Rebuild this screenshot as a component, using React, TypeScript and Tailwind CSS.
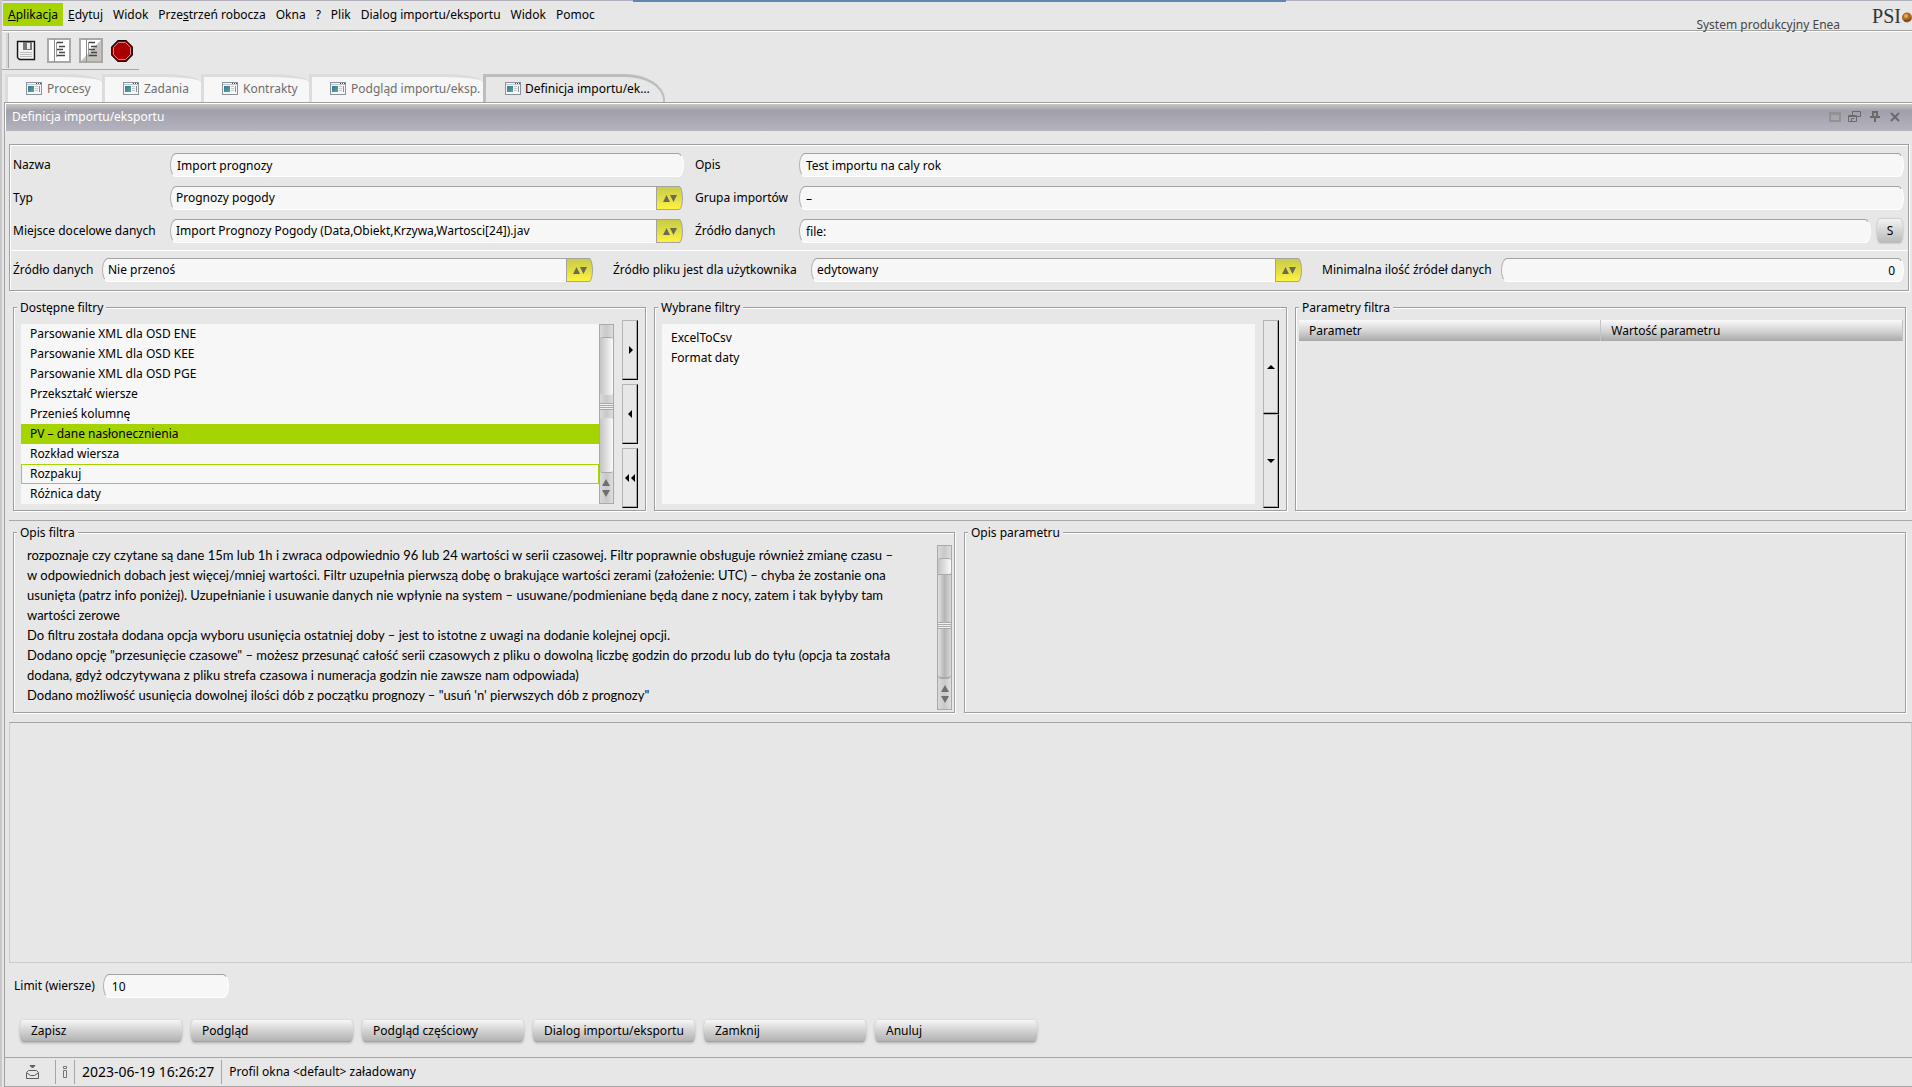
import type { ReactNode } from "react";
import clsx from "clsx";

const menuItems = [
  { label: <><u>A</u>plikacja</>, active: true },
  { label: <><u>E</u>dytuj</> },
  { label: "Widok" },
  { label: <>Prze<u>s</u>trzeń robocza</> },
  { label: "Okna" },
  { label: "?" },
  { label: "Plik" },
  { label: "Dialog importu/eksportu" },
  { label: "Widok" },
  { label: "Pomoc" },
];

const tabs = [
  { label: "Procesy", width: "w-[97px]" },
  { label: "Zadania", width: "w-[99px]" },
  { label: "Kontrakty", width: "w-[108px]" },
  { label: "Podgląd importu/eksp.", width: "w-[174px]" },
];

const availableFilters = [
  "Parsowanie XML dla OSD ENE",
  "Parsowanie XML dla OSD KEE",
  "Parsowanie XML dla OSD PGE",
  "Przekształć wiersze",
  "Przenieś kolumnę",
  "PV – dane nasłonecznienia",
  "Rozkład wiersza",
  "Rozpakuj",
  "Różnica daty",
];

const filterDescription = [
  "rozpoznaje czy czytane są dane 15m lub 1h i zwraca odpowiednio 96 lub 24 wartości w serii czasowej. Filtr poprawnie obsługuje również zmianę czasu –",
  "w odpowiednich dobach jest więcej/mniej wartości. Filtr uzupełnia pierwszą dobę o brakujące wartości zerami (założenie: UTC) – chyba że zostanie ona",
  "usunięta (patrz info poniżej). Uzupełnianie i usuwanie danych nie wpłynie na system – usuwane/podmieniane będą dane z nocy, zatem i tak byłyby tam",
  "wartości zerowe",
  "Do filtru została dodana opcja wyboru usunięcia ostatniej doby – jest to istotne z uwagi na dodanie kolejnej opcji.",
  'Dodano opcję "przesunięcie czasowe" – możesz przesunąć całość serii czasowych z pliku o dowolną liczbę godzin do przodu lub do tyłu (opcja ta została',
  "dodana, gdyż odczytywana z pliku strefa czasowa i numeracja godzin nie zawsze nam odpowiada)",
  "Dodano możliwość usunięcia dowolnej ilości dób z początku prognozy – \"usuń 'n' pierwszych dób z prognozy\"",
];

const actions = ["Zapisz", "Podgląd", "Podgląd częściowy", "Dialog importu/eksportu", "Zamknij", "Anuluj"];

const TabIcon = () => (
  <svg width="16" height="13" viewBox="0 0 16 13" className="shrink-0" aria-hidden="true">
    <defs>
      <linearGradient id="tabIcon" x1="0" y1="0" x2="1" y2="1">
        <stop offset="0" stopColor="#3c6fa5" />
        <stop offset="1" stopColor="#4fb08a" />
      </linearGradient>
    </defs>
    <rect x="0.5" y="0.5" width="15" height="12" fill="#f7f7f7" stroke="#8c9299" />
    <path d="M1 2.5h14" stroke="#c3c7cc" />
    <path d="M10 1.5h1M12 1.5h1M14 1.5h1" stroke="#44494f" />
    <rect x="2" y="4" width="6" height="6" fill="url(#tabIcon)" />
    <path d="M9 4.5h3M9 6.5h3M9 8.5h3" stroke="#c3c7cc" />
    <path d="M13.5 4v6" stroke="#8c9299" />
  </svg>
);

const SaveIcon = () => (
  <svg width="20" height="21" viewBox="0 0 20 21" aria-hidden="true">
    <path d="M1.5 1.5h17v18h-15l-2-2z" fill="#f4f4f4" stroke="#151515" strokeWidth="1.4" />
    <path d="M2.5 2.5v15M17.5 2.5v16" stroke="#b9b9b9" />
    <rect x="7" y="2" width="9" height="8" fill="#777" />
    <rect x="11" y="3" width="3" height="6" fill="#eee" />
    <path d="M4 12.5h12M4 14.5h12M4 16.5h12" stroke="#bcbcbc" />
  </svg>
);

const DocumentIcon = ({ shaded = false }: { shaded?: boolean }) => (
  <svg width="24" height="25" viewBox="0 0 24 25" aria-hidden="true">
    <rect x="1" y="1" width="22" height="23" fill="#fff" stroke="#a9a9a9" strokeWidth="2" />
    {shaded && <path d="M22 2v21H2z" fill="#c6c3bb" />}
    <path d="M7.5 1v23" stroke="#8b8b8b" />
    <path d="M10 4.5h6M12 8.5h6M10 11.5h6M12 14.5h6M10 17.5h8" stroke="#474747" strokeWidth="1.5" />
    <path d="M9.5 4v15" stroke="#999" />
  </svg>
);

const StopIcon = () => (
  <svg width="22" height="22" viewBox="0 0 22 22" aria-hidden="true">
    <path d="M7 .7h8L21.3 7v8L15 21.3H7L.7 15V7z" fill="#a80000" stroke="#1c0000" strokeWidth="1.2" />
    <path d="M7.5 2.5h7l5 5v7l-5 5h-7l-5-5v-7z" fill="none" stroke="#d98080" />
  </svg>
);

const Field = ({ id, value, className }: { id: string; value: string; className?: string }) => (
  <input
    id={id}
    defaultValue={value}
    className={clsx(
      "h-6 w-full min-w-0 rounded-[6px/12px] border border-t-[#a3a3a3] border-r-white border-b-white border-l-[#b0b0b0] bg-[#f7f7f7] px-1.5 outline-none",
      className,
    )}
  />
);

const Combo = ({ id, value }: { id: string; value: string }) => (
  <div className="mr-px flex h-6 min-w-0">
    <select
      id={id}
      className="h-6 min-w-0 flex-1 appearance-none rounded-tl-[6px_12px] rounded-bl-[6px_12px] border border-r-0 border-t-[#a3a3a3] border-b-white border-l-[#b0b0b0] bg-[#f7f7f7] px-[5px] outline-none"
    >
      <option>{value}</option>
    </select>
    <span className="pointer-events-none flex w-[27px] items-center justify-center rounded-tr-[4px_12px] rounded-br-[4px_12px] border border-[#a3a3a3] bg-linear-to-b from-[#c9cc46] via-[#e0dd45] to-[#fff23f]">
      <svg width="14" height="7" viewBox="0 0 14 7" fill="#6b6b55" aria-hidden="true">
        <path d="M0 7L3.500 0L7 7zM7 0h7l-3.500 7z" />
      </svg>
    </span>
  </div>
);

const Group = ({ title, className, children }: { title: string; className?: string; children?: ReactNode }) => (
  <fieldset
    className={clsx(
      "min-w-0 border border-[#9f9f9f] shadow-[1px_1px_0_#fff,inset_1px_1px_0_#fff]",
      className,
    )}
  >
    <legend className="ml-[3px] bg-[#e7e7e7] px-[3px] leading-[17px]">{title}</legend>
    {children}
  </fieldset>
);

const ScrollArrows = () => (
  <svg width="8" height="18" viewBox="0 0 8 18" fill="#6f6f6f" className="mx-auto" aria-hidden="true">
    <path d="M0 7L4 0l4 7zM0 11h8l-4 7z" />
  </svg>
);

const Grip = () => (
  <span className="block h-[7px] border-y border-[#a9a9a9] bg-[#f2f2f2] py-px">
    <span className="block h-[3px] border-y border-[#a9a9a9]" />
  </span>
);

const SideButton = ({ label, path, className }: { label: string; path: string; className?: string }) => (
  <button
    type="button"
    aria-label={label}
    className={clsx(
      "flex w-4 items-center justify-center border border-t-[#b4b4b4] border-r-black border-b-black border-l-[#b4b4b4] shadow-[inset_-1px_-1px_0_#a9a9a9]",
      className,
    )}
  >
    <svg width="12" height="8" viewBox="0 0 12 8" fill="#000" className="shrink-0" aria-hidden="true">
      <path d={path} />
    </svg>
  </button>
);

const TitleIcons = () => (
  <div className="flex items-center gap-[7px] pb-px text-[#6a6a6a]">
    <button type="button" aria-label="Maksymalizuj">
      <svg width="12" height="10" viewBox="0 0 12 10" fill="none" stroke="#929292" strokeWidth="2" aria-hidden="true">
        <path d="M1 1h10v8H1zM1 2h10" />
      </svg>
    </button>
    <button type="button" aria-label="Przywróć">
      <svg width="13" height="11" viewBox="0 0 13 11" fill="none" stroke="currentColor" aria-hidden="true">
        <path d="M4.5 4V.5h8v5H9M.5 4.5h8v6h-8zM.5 5.5h8M3.5 10V7.500h3" />
      </svg>
    </button>
    <button type="button" aria-label="Przypnij" className="ml-0.5">
      <svg width="10" height="11" viewBox="0 0 10 11" fill="none" stroke="currentColor" strokeWidth="2" aria-hidden="true">
        <path d="M3 6V1h4v5M0 6h10M5 6v5" />
      </svg>
    </button>
    <button type="button" aria-label="Zamknij okno" className="ml-[3px]">
      <svg width="10" height="10" viewBox="0 0 10 10" fill="none" stroke="currentColor" strokeWidth="2" aria-hidden="true">
        <path d="M1 1l8 8M9 1L1 9" />
      </svg>
    </button>
  </div>
);

export default function App() {
  return (
    <div className="flex min-h-screen flex-col border-l-2 border-[#c9c7cc] bg-[#e7e7e7] font-['Noto_Sans','Open_Sans',sans-serif] text-xs text-black">
      <div className="flex h-[2px] items-start">
        <span className="h-px flex-[631] bg-[#b0afba]" />
        <span className="h-[2px] flex-[653] bg-[#5f86b3]" />
        <span className="h-px flex-[626] bg-[#b0afba]" />
      </div>

      <header className="flex h-[29px] items-stretch justify-between border-b border-[#a6a6a6] pl-px shadow-[0_1px_0_#fff]">
        <nav className="flex items-center pb-[3px]">
          {menuItems.map((item, i) => (
            <button
              key={i}
              type="button"
              className={clsx("h-[23px] px-[5px] whitespace-nowrap", item.active && "bg-[#a5d400]")}
            >
              {item.label}
            </button>
          ))}
        </nav>
        <div className="flex">
          <span className="mr-8 self-end leading-[10px] text-[#444]">System produkcyjny Enea</span>
          <span className="flex items-center pb-px font-['Liberation_Serif',serif] text-xl leading-5 text-[#333]">
            PSI
            <svg width="11" height="11" viewBox="0 0 11 11" className="mt-1" aria-hidden="true">
              <circle cx="6" cy="5.500" r="5" fill="#b0691f" />
              <circle cx="5" cy="4" r="2" fill="#e2aa5c" />
              <path d="M3 8.500c3 1 5 0 7-2" stroke="#5b2f0c" fill="none" />
            </svg>
          </span>
        </div>
      </header>

      <div className="mt-px flex h-[38px] w-[137px] items-center border-b border-[#a6a6a6] pl-1">
        <span className="h-[35px] w-[3px] border-r border-[#a6a6a6] bg-[#d5d5d5]" />
        <button type="button" aria-label="Zapisz" className="ml-[7px]"><SaveIcon /></button>
        <button type="button" aria-label="Podgląd" className="ml-[11px]"><DocumentIcon /></button>
        <button type="button" aria-label="Podgląd częściowy" className="ml-2"><DocumentIcon shaded /></button>
        <button type="button" aria-label="Zatrzymaj" className="ml-2"><StopIcon /></button>
      </div>

      <div className="mt-1 flex h-7 items-end pl-[3px]" role="tablist">
        {tabs.map((tab) => (
          <button
            key={tab.label}
            type="button"
            role="tab"
            className={clsx(
              "flex h-7 items-center gap-[5px] rounded-tr-[40px_8px] border-t-3 border-l-3 border-[#dcdcdc] bg-[#f7f7f7] pb-0.5 pl-[18px] whitespace-nowrap text-[#6e6e6e]",
              tab.width,
            )}
          >
            <TabIcon />
            {tab.label}
          </button>
        ))}
        <button
          type="button"
          role="tab"
          aria-selected="true"
          className="flex h-7 w-[182px] items-center gap-1 rounded-tr-[40px_26px] border-t-3 border-r-2 border-l-3 border-[#bdbdbd] bg-[#e7e7e7] pb-0.5 pl-[19px] whitespace-nowrap"
        >
          <TabIcon />
          Definicja importu/ek…
        </button>
      </div>

      <main className="ml-[2px] flex flex-1 flex-col border-t border-l border-[#a0a0a0]">
        <div className="flex h-7 items-center justify-between border-t border-l border-white bg-linear-to-b from-[#c8c8c8] via-[#a19fa9] via-25% to-[#b5b3be] pr-3 pb-px pl-1.5 text-white">
          <h1>Definicja importu/eksportu</h1>
          <TitleIcons />
        </div>

        <section className="mt-[13px] mr-[3px] ml-1 border border-[#9f9f9f] shadow-[1px_1px_0_#fff,inset_1px_1px_0_#fff]">
          <div className="grid grid-cols-[157px_514fr_115px_1105fr] items-center gap-y-[9px] border-b border-white pt-2 pr-1 pb-[7px] pl-[3px]">
            <label htmlFor="nazwa">Nazwa</label>
            <Field id="nazwa" value="Import prognozy" />
            <label htmlFor="opis" className="pl-[11px]">Opis</label>
            <Field id="opis" value="Test importu na caly rok" />

            <label htmlFor="typ">Typ</label>
            <Combo id="typ" value="Prognozy pogody" />
            <label htmlFor="grupa" className="pl-[11px]">Grupa importów</label>
            <Field id="grupa" value="–" />

            <label htmlFor="miejsce">Miejsce docelowe danych</label>
            <Combo id="miejsce" value="Import Prognozy Pogody (Data,Obiekt,Krzywa,Wartosci[24]).jav" />
            <label htmlFor="zrodlo" className="pl-[11px]">Źródło danych</label>
            <div className="flex gap-1.5">
              <Field id="zrodlo" value="file:" />
              <button
                type="button"
                className="mr-px h-6 w-[26px] shrink-0 rounded-[3px/12px] bg-linear-to-b from-[#f3f1f3] to-[#b9b9b9] shadow-[0_0_2px_#999]"
              >
                S
              </button>
            </div>
          </div>
          <div className="grid grid-cols-[89px_492fr_217px_492fr_198px_403fr] items-center pt-[7px] pr-1 pb-2 pl-[3px]">
            <label htmlFor="przenies">Źródło danych</label>
            <Combo id="przenies" value="Nie przenoś" />
            <label htmlFor="plik" className="pl-[19px] whitespace-nowrap">Źródło pliku jest dla użytkownika</label>
            <Combo id="plik" value="edytowany" />
            <label htmlFor="minimum" className="pl-[19px] whitespace-nowrap">Minimalna ilość źródeł danych</label>
            <Field id="minimum" value="0" className="pr-2 text-right" />
          </div>
        </section>

        <div className="mt-2 flex gap-2 pr-1.5 pl-2">
          <Group title="Dostępne filtry" className="flex-[633]">
            <div className="flex pt-1 pr-[7px] pb-0.5 pl-[7px]">
              <ul role="listbox" aria-label="Dostępne filtry" className="mt-1 flex-1 self-start bg-[#f7f7f7]">
                {availableFilters.map((name) => (
                  <li
                    key={name}
                    role="option"
                    aria-selected={name.startsWith("PV")}
                    className={clsx(
                      "h-5 border px-2 leading-[18px]",
                      name.startsWith("PV") && "bg-[#a5d400]",
                      name.startsWith("PV") || name === "Rozpakuj" ? "border-[#a5d400]" : "border-transparent",
                    )}
                  >
                    {name}
                  </li>
                ))}
              </ul>
              <div className="mt-1 flex h-[180px] w-[15px] flex-col border border-[#a9a9a9] bg-linear-to-r from-[#d9d9d9] via-[#c9c9c9] to-[#dedede]">
                <span className="h-3" />
                <span className="h-[58px] rounded-[4px/2px] border-t border-[#a9a9a9] bg-linear-to-r from-[#c4c4c4] to-[#fafafa]" />
                <span className="h-2" />
                <Grip />
                <span className="h-2" />
                <span className="mb-1.5 flex-1 rounded-[4px/2px] border-b border-[#a9a9a9] bg-linear-to-r from-[#c4c4c4] to-[#fafafa]" />
                <ScrollArrows />
                <span className="h-1.5" />
              </div>
              <div className="ml-2 flex flex-col gap-1">
                <SideButton label="Dodaj" path="M5 0l4 4-4 4z" className="h-[60px]" />
                <SideButton label="Usuń" path="M8 0L4 4l4 4z" className="h-[60px]" />
                <SideButton label="Usuń wszystkie" path="M5 0L1 4l4 4zM11 0L7 4l4 4z" className="h-[60px]" />
              </div>
            </div>
          </Group>

          <Group title="Wybrane filtry" className="flex-[633]">
            <div className="flex pt-1 pr-[7px] pb-0.5 pl-[7px]">
              <ul role="listbox" aria-label="Wybrane filtry" className="mt-1 h-[180px] flex-1 bg-[#f7f7f7] px-[9px] py-1 leading-5">
                <li role="option">ExcelToCsv</li>
                <li role="option">Format daty</li>
              </ul>
              <div className="ml-2 flex flex-col">
                <SideButton label="W górę" path="M2 6l4-4 4 4z" className="h-[94px]" />
                <SideButton label="W dół" path="M2 2h8L6 6z" className="h-[94px]" />
              </div>
            </div>
          </Group>

          <Group title="Parametry filtra" className="flex-[611]">
            <table className="mx-[3px] mt-1 w-[calc(100%-5px)] table-fixed">
              <thead>
                <tr className="h-[21px] bg-linear-to-b from-[#fbf9fb] via-[#d6d6d6] to-[#a9a9a9] text-left">
                  <th className="border-r border-[#c4c4c4] px-2.5 font-normal">Parametr</th>
                  <th className="border-r border-[#c4c4c4] px-2.5 font-normal">Wartość parametru</th>
                </tr>
              </thead>
            </table>
          </Group>
        </div>

        <div className="mt-[9px] ml-1 border-t border-[#a9a9a9]" />

        <div className="mt-[3px] flex gap-[9px] pr-1.5 pl-2">
          <Group title="Opis filtra" className="flex-1">
            <div className="flex pr-0.5 pb-0.5 pl-[13px]">
              <div className="min-w-0 flex-1 overflow-hidden pt-1 font-['Lato','Noto_Sans',sans-serif] text-[13px] leading-5 whitespace-nowrap">
                {filterDescription.map((line) => (
                  <p key={line}>{line}</p>
                ))}
              </div>
              <div className="mt-1 flex h-[165px] w-[15px] flex-col border border-[#a9a9a9] bg-linear-to-r from-[#d9d9d9] via-[#c9c9c9] to-[#dedede]">
                <span className="h-3" />
                <span className="h-4 rounded-[4px/2px] border-t border-[#a9a9a9] bg-linear-to-r from-[#c4c4c4] to-[#fafafa]" />
                <span className="h-12 border-t border-[#a9a9a9] bg-linear-to-r from-[#e2e2e2] via-[#b5b5b5] to-[#d9d9d9]" />
                <Grip />
                <span className="mb-1.5 flex-1 rounded-b-[4px] border-b-2 border-[#a9a9a9] bg-linear-to-r from-[#e2e2e2] via-[#b5b5b5] to-[#d9d9d9]" />
                <ScrollArrows />
                <span className="h-1.5" />
              </div>
            </div>
          </Group>
          <Group title="Opis parametru" className="flex-1" />
        </div>

        <div className="mt-[9px] ml-1 min-h-40 flex-1 border border-t-[#a3a3a3] border-[#cbcbcb]" />

        <div className="mt-[11px] flex items-center gap-2 pl-[9px]">
          <label htmlFor="limit">Limit (wiersze)</label>
          <div className="w-[126px]">
            <Field id="limit" value="10" className="px-2" />
          </div>
        </div>

        <div className="mt-[22px] mb-[15px] flex gap-[9px] pl-[15px]">
          {actions.map((name) => (
            <button
              key={name}
              type="button"
              className="h-[22px] w-[162px] rounded-[3px/12px] border-b border-[#a3a3a3] bg-linear-to-b from-[#f8f6f8] via-[#d3d3d3] to-[#b3b3b3] px-[11px] text-left whitespace-nowrap shadow-[0_1px_3px_#a9a9a9]"
            >
              {name}
            </button>
          ))}
        </div>

        <footer className="flex h-[30px] items-center border-t border-b border-[#a6a6a6] py-0.5">
          <svg width="13" height="14" viewBox="0 0 13 14" fill="none" stroke="#5c5c5c" className="mr-4 ml-[21px]" aria-hidden="true">
            <path d="M4 .5h5L6.500 3z" fill="#5c5c5c" />
            <path d="M2.500 5.500h8l2 2v6H.5v-6zM1 8l3.500 2.500h4L12 8" />
          </svg>
          <span className="h-6 border-l border-[#a6a6a6]" />
          <svg width="4" height="12" viewBox="0 0 4 12" fill="none" stroke="#777" className="mx-[7px]" aria-hidden="true">
            <path d="M.5.5h3v2h-3zM.5 4.500h3v7h-3z" />
          </svg>
          <span className="h-6 border-l border-[#a6a6a6]" />
          <time className="px-[7px] text-sm">2023-06-19 16:26:27</time>
          <span className="h-6 border-l border-[#a6a6a6]" />
          <span className="pl-[7px]">Profil okna &lt;default&gt; załadowany</span>
        </footer>
      </main>
    </div>
  );
}
